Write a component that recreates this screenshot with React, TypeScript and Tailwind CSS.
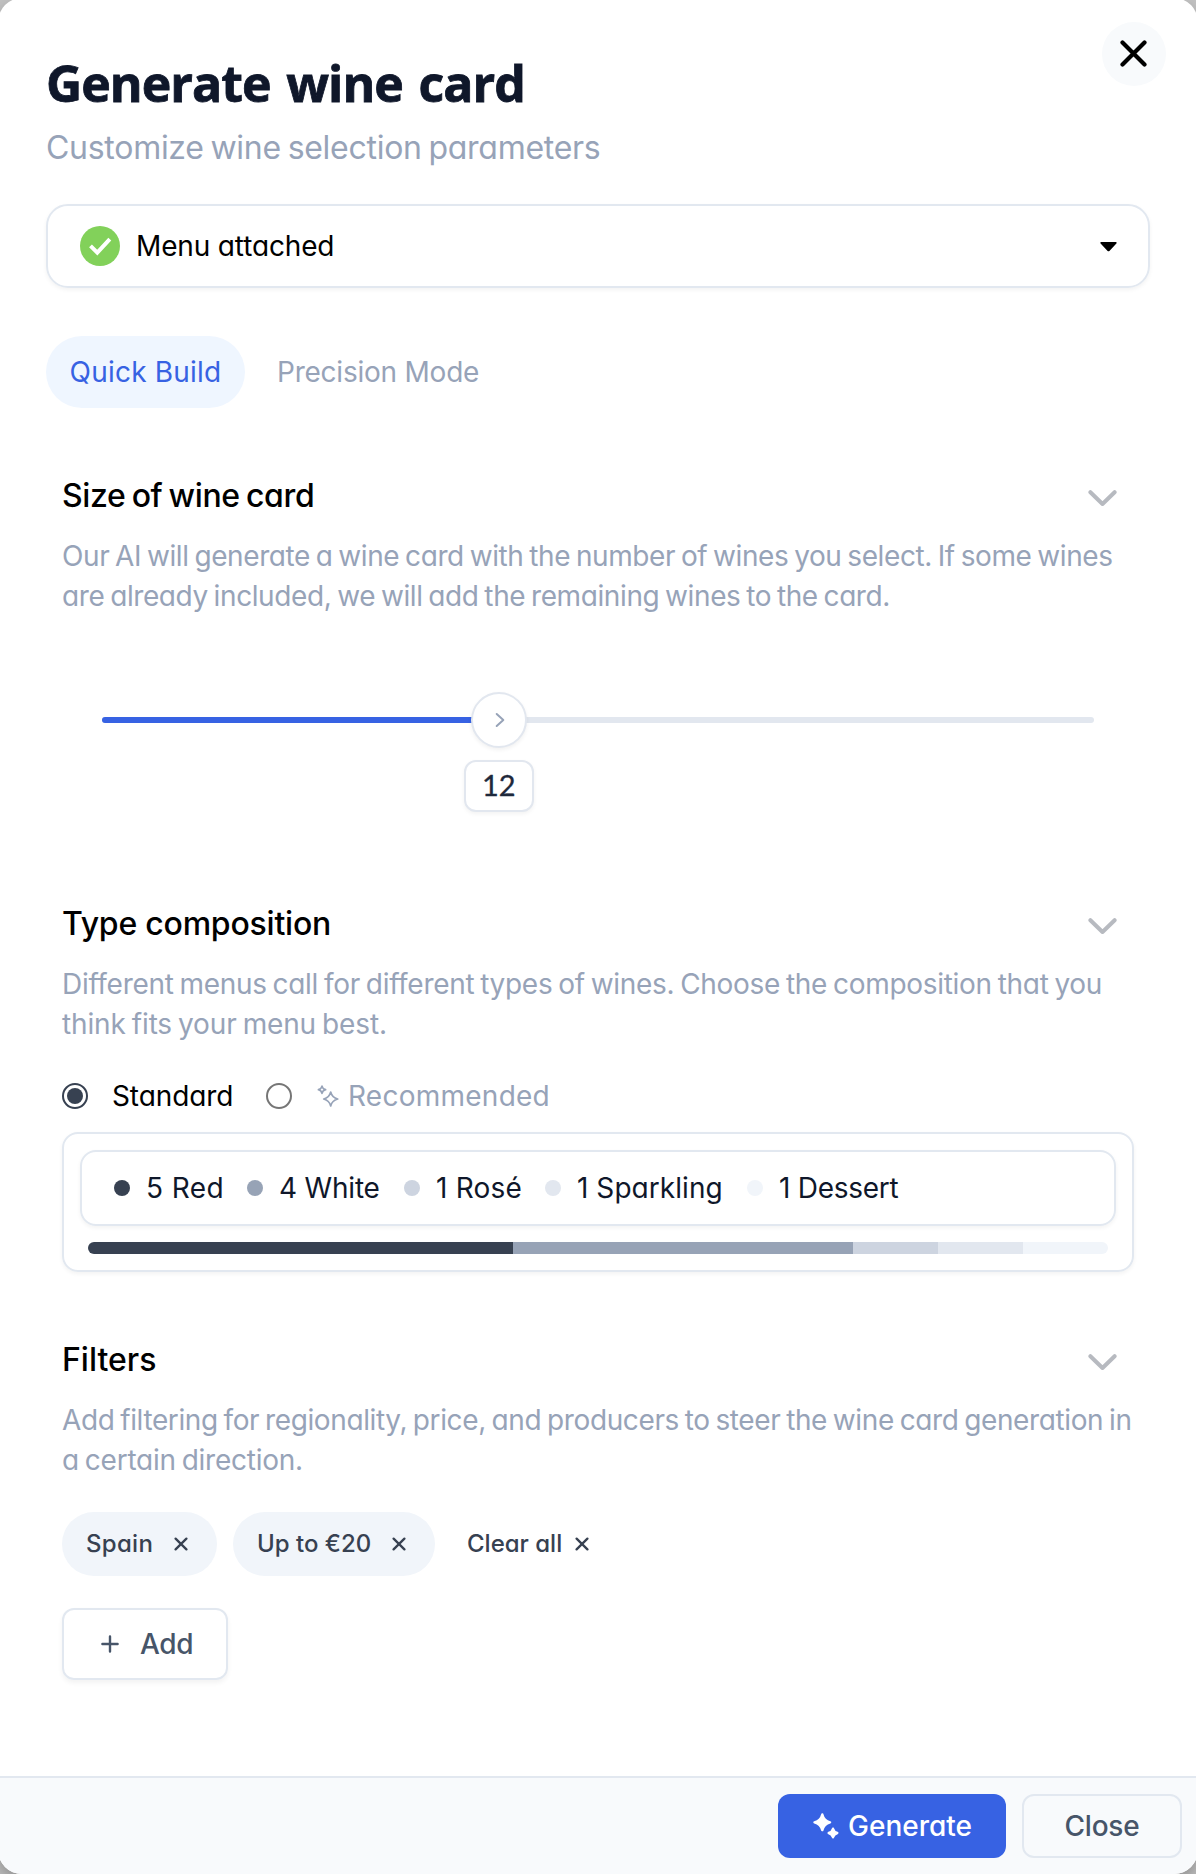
import type { ReactNode } from "react";

const legend = [
  { label: "5 Red", dot: "bg-[#374151]", item: "w-[133px]", text: "tracking-[0.4px]" },
  { label: "4 White", dot: "bg-[#97a3b6]", item: "w-[157px]", text: "tracking-[-0.2px]" },
  { label: "1 Rosé", dot: "bg-[#cdd4e0]", item: "w-[141px]", text: "tracking-[0.2px]" },
  { label: "1 Sparkling", dot: "bg-[#e2e7ef]", item: "w-[202px]", text: "tracking-[0.05px]" },
  { label: "1 Dessert", dot: "bg-[#f1f5fa]", item: "", text: "tracking-[-0.26px]" },
];

const segments = [
  { count: 5, color: "bg-[#374151]" },
  { count: 4, color: "bg-[#97a3b6]" },
  { count: 1, color: "bg-[#cdd4e0]" },
  { count: 1, color: "bg-[#e2e7ef]" },
  { count: 1, color: "bg-[#f1f5fa]" },
];

function SmallX() {
  return (
    <svg className="h-[14px] w-[14px] shrink-0" viewBox="0 0 14 14" fill="none" stroke="currentColor" strokeWidth="2.3" strokeLinecap="round">
      <path d="M1.6 1.6 12.4 12.4M12.4 1.6 1.6 12.4" />
    </svg>
  );
}

function SectionHeader({ title, className }: { title: string; className: string }) {
  return (
    <div className="flex h-10 items-center justify-between pr-[17px]">
      <h2 className={`pt-0.5 text-[32px] leading-10 font-medium text-black ${className}`}>{title}</h2>
      <svg className="mt-1.5 h-4 w-[29px]" viewBox="0 0 29 16" fill="none" stroke="#b7bac0" strokeWidth="4" strokeLinecap="round" strokeLinejoin="round">
        <path d="M2.4 2.2 14.5 14 26.6 2.2" />
      </svg>
    </div>
  );
}

function Description({ children }: { children: ReactNode }) {
  return <p className="mt-[21px] text-[28px] leading-10 whitespace-nowrap text-[#97a3b8]">{children}</p>;
}

export default function App() {
  return (
    <div className="h-[1874px] w-[1196px] overflow-hidden bg-[#c2c2c2] font-['Inter',sans-serif] [font-feature-settings:'cv11']">
      <div className="-mx-[2px] -mt-[2px] flex h-[1876px] flex-col overflow-hidden rounded-[24px] bg-white shadow-[0_8px_16px_rgba(0,0,0,0.25)]">
        <header className="flex h-[206px] shrink-0 justify-between pt-[24px] pr-8 pl-12">
          <div className="pt-[31px]">
            <h1 className="font-['Open_Sans',sans-serif] text-[50px] leading-[60px] font-bold tracking-[-0.95px] whitespace-nowrap text-[#0f172a] [-webkit-text-stroke:0.8px_#0f172a] [word-spacing:3.5px]">
              Generate wine card
            </h1>
            <p className="mt-[15px] text-[32px] leading-10 tracking-[-0.28px] whitespace-nowrap text-[#97a3b8] [word-spacing:-0.06em]">
              Customize wine selection parameters
            </p>
          </div>
          <button className="flex h-16 w-16 items-center justify-center rounded-full bg-[#f8fafc]">
            <svg className="-mt-px mr-px h-[27px] w-[27px]" viewBox="0 0 27 27" fill="none" stroke="#000" strokeWidth="4.2" strokeLinecap="round">
              <path d="M2.5 2.5 24.5 24.5M24.5 2.5 2.5 24.5" />
            </svg>
          </button>
        </header>

        <div className="mx-12 flex h-[84px] w-[1104px] shrink-0 items-center rounded-[22px] border-2 border-[#e2e8f0] pr-[31px] pl-8 shadow-[0_2px_4px_rgba(0,0,0,0.05)]">
          <svg className="h-10 w-10" viewBox="0 0 40 40">
            <circle cx="20" cy="20" r="20" fill="#82d15a" />
            <path d="M10.5 19.8 17.3 26.6 29.8 13.2" fill="none" stroke="#fff" strokeWidth="4" />
          </svg>
          <span className="ml-4 text-[28px] leading-10 tracking-[-0.15px] text-black">Menu attached</span>
          <svg className="mt-0.5 ml-auto h-[10px] w-[17px]" viewBox="0 0 17 10">
            <path d="M1.2 0h14.6c.9 0 1.2.9.6 1.5L9.4 8.9c-.5.5-1.3.5-1.8 0L.6 1.5C0 .9.3 0 1.2 0Z" fill="#000" />
          </svg>
        </div>

        <nav className="mt-12 ml-12 flex shrink-0 items-center">
          <button className="h-[72px] w-[199px] rounded-full bg-[#eff6ff] text-[28px] tracking-[0.2px] text-[#3762e3]">Quick Build</button>
          <button className="ml-8 text-[28px] tracking-[-0.23px] text-[#97a3b8]">Precision Mode</button>
        </nav>

        <main className="ml-[64px] w-[1072px] grow pt-[67px]">
          <section className="h-[428px]">
            <SectionHeader title="Size of wine card" className="tracking-[-0.37px] [word-spacing:-0.06em]" />
            <Description>
              <span className="block tracking-[-0.4px] [word-spacing:-0.06em]">Our AI will generate a wine card with the number of wines you select. If some wines</span>
              <span className="block tracking-[-0.4px] [word-spacing:-0.06em]">are already included, we will add the remaining wines to the card.</span>
            </Description>
            <div className="relative mx-10 mt-[101px] h-[6px] rounded-full bg-[#e2e7ef]">
              <div className="h-full w-2/5 rounded-full bg-[#3762e3]" />
              <div className="absolute top-1/2 left-2/5 flex h-14 w-14 -translate-1/2 items-center justify-center rounded-full border-2 border-[#e2e7ef] bg-white shadow-[0_2px_4px_rgba(0,0,0,0.06)]">
                <svg className="ml-0.5 h-4 w-[10px]" viewBox="0 0 10 16" fill="none" stroke="#97a3b8" strokeWidth="2" strokeLinecap="round" strokeLinejoin="round">
                  <path d="M1.7 2 8.3 8 1.7 14" />
                </svg>
              </div>
              <div className="absolute top-[43px] left-2/5 flex h-[52px] w-[70px] -translate-x-1/2 items-center justify-center rounded-xl border-2 border-[#e2e7ef] bg-white pb-[3px] font-['Lato',sans-serif] text-[29px] leading-none text-[#1e293b] shadow-[0_2px_4px_rgba(0,0,0,0.05)] [-webkit-text-stroke:0.3px_#1e293b]">
                12
              </div>
            </div>
          </section>

          <section className="h-[436px]">
            <SectionHeader title="Type composition" className="tracking-[-0.22px]" />
            <Description>
              <span className="block tracking-[-0.3px] [word-spacing:-0.06em]">Different menus call for different types of wines. Choose the composition that you</span>
              <span className="block tracking-[-0.14px] [word-spacing:-0.06em]">think fits your menu best.</span>
            </Description>
            <div className="mt-8 flex h-10 items-center text-[28px]">
              <span className="flex h-[26px] w-[26px] items-center justify-center rounded-full border-2 border-[#374151]">
                <span className="h-4 w-4 rounded-full bg-[#374151]" />
              </span>
              <span className="ml-6 w-[122px] tracking-[-0.1px] text-black">Standard</span>
              <span className="ml-8 h-[26px] w-[26px] rounded-full border-2 border-[#767676]" />
              <svg className="ml-6 h-6 w-6" viewBox="0 0 24 24" fill="none" stroke="#97a3b8" strokeWidth="1.7" strokeLinejoin="round">
                <path d="M6 2.1Q6.7 5 9.6 5.7 6.7 6.4 6 9.3 5.3 6.4 2.4 5.7 5.3 5 6 2.1Z" />
                <path d="M14.7 8Q16.1 13.6 21.7 15 16.1 16.4 14.7 22 13.3 16.4 7.7 15 13.3 13.6 14.7 8Z" />
              </svg>
              <span className="ml-2 tracking-[0.25px] text-[#97a3b8]">Recommended</span>
            </div>
            <div className="mt-4 h-[140px] rounded-[16px] border-2 border-[#e2e8f0] p-4 shadow-[0_2px_4px_rgba(0,0,0,0.05)]">
              <div className="flex h-[76px] items-center rounded-[16px] border-2 border-[#e2e8f0] pl-8 shadow-[0_2px_4px_rgba(0,0,0,0.05)]">
                {legend.map((l) => (
                  <div key={l.label} className={`flex shrink-0 items-center gap-4 ${l.item}`}>
                    <span className={`h-4 w-4 shrink-0 rounded-full ${l.dot}`} />
                    <span className={`text-[28px] leading-10 whitespace-nowrap text-[#0f172a] ${l.text}`}>{l.label}</span>
                  </div>
                ))}
              </div>
              <div className="mx-2 mt-4 flex h-3 overflow-hidden rounded-full">
                {segments.map((s, i) => (
                  <div key={i} className={s.color} style={{ width: `${(s.count / 12) * 100}%` }} />
                ))}
              </div>
            </div>
          </section>

          <section>
            <SectionHeader title="Filters" className="" />
            <Description>
              <span className="block tracking-[-0.39px] [word-spacing:-0.06em]">Add filtering for regionality, price, and producers to steer the wine card generation in</span>
              <span className="block tracking-[-0.25px] [word-spacing:-0.06em]">a certain direction.</span>
            </Description>
            <div className="mt-8 flex h-16 items-center text-2xl font-medium text-[#374151]">
              <div className="flex h-16 w-[155px] items-center justify-between rounded-full bg-[#f1f5fa] pr-[29px] pl-6">
                <span className="tracking-[0.3px]">Spain</span>
                <SmallX />
              </div>
              <div className="ml-4 flex h-16 w-[202px] items-center justify-between rounded-full bg-[#f1f5fa] pr-[29px] pl-6">
                <span>Up to €20</span>
                <SmallX />
              </div>
              <div className="ml-8 flex items-center gap-[13px]">
                <span>Clear all</span>
                <SmallX />
              </div>
            </div>
            <button className="mt-8 flex h-[72px] w-[166px] items-center rounded-[12px] border-2 border-[#e2e8f0] pl-[37px] text-[28px] font-medium text-[#475569] shadow-[0_3px_5px_rgba(0,0,0,0.05)]">
              <svg className="h-[18px] w-[18px]" viewBox="0 0 18 18" fill="none" stroke="currentColor" strokeWidth="2.4" strokeLinecap="round">
                <path d="M9 1.4v15.2M1.4 9h15.2" />
              </svg>
              <span className="ml-[21px] tracking-[-0.4px]">Add</span>
            </button>
          </section>
        </main>

        <footer className="flex h-[98px] shrink-0 items-start justify-end gap-4 border-t-2 border-[#e2e8f0] bg-[#f8fafc] pt-4 pr-4 text-[28px] font-medium">
          <button className="flex h-16 w-[228px] items-center rounded-[12px] bg-[#3762e3] pl-[35px] text-white">
            <svg className="h-[26px] w-[26px]" viewBox="0 0 26 26" fill="#fff" stroke="#fff" strokeWidth="2.4" strokeLinejoin="round">
              <path d="M9.3 1.5Q10.8 7.8 17.1 9.3 10.8 10.8 9.3 17.1 7.8 10.8 1.5 9.3 7.8 7.8 9.3 1.5Z" />
              <path d="M20 15.7Q20.9 19.100 24.3 20 20.9 20.9 20 24.3 19.1 20.9 15.7 20 19.1 19.1 20 15.7Z" />
            </svg>
            <span className="ml-[9px]">Generate</span>
          </button>
          <button className="h-16 w-40 rounded-[12px] border-2 border-[#e2e8f0] tracking-[-0.22px] text-[#475569]">Close</button>
        </footer>
      </div>
    </div>
  );
}
